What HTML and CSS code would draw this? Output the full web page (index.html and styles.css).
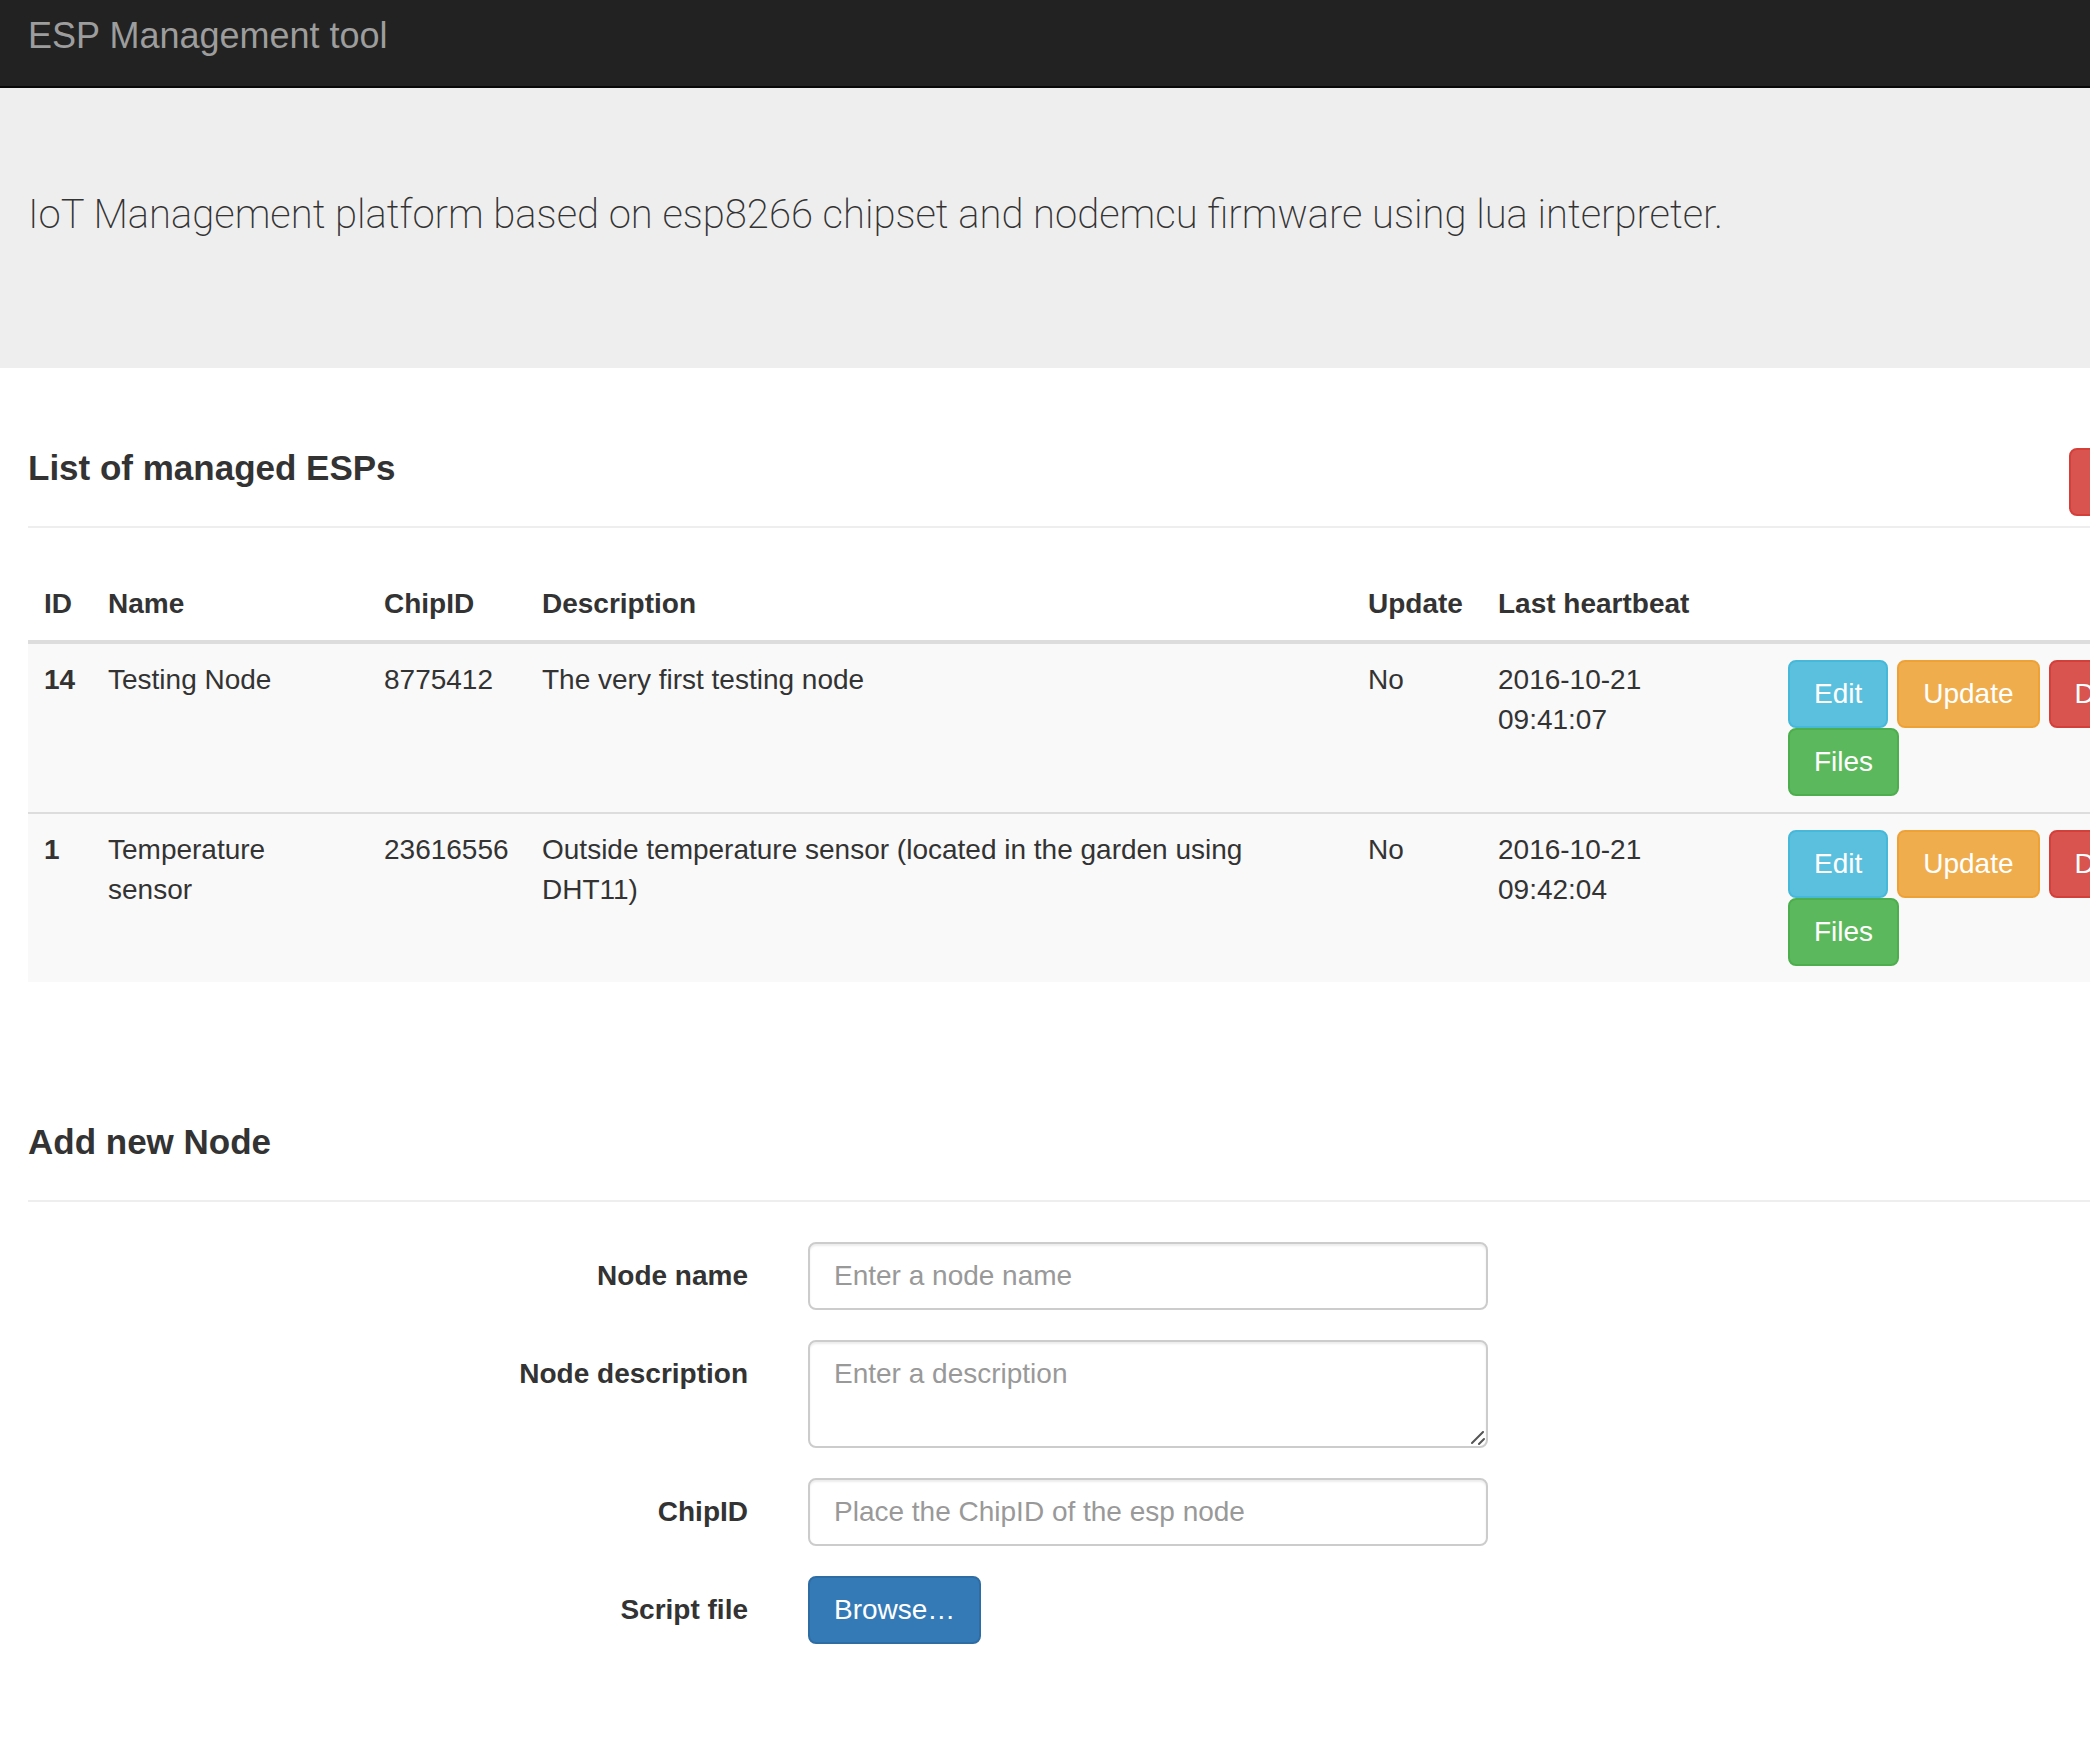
FILE: index.html
```html
<!DOCTYPE html>
<html lang="en">
<head>
<meta charset="utf-8">
<meta name="viewport" content="width=device-width, initial-scale=1">
<title>ESP Management tool</title>
<link rel="stylesheet" href="styles.css">
</head>
<body>
<nav class="navbar"><a class="brand" href="#">ESP Management tool</a></nav>
<header class="hero">
  <p class="lead">IoT Management platform based on esp8266 chipset and nodemcu firmware using lua interpreter.</p>
</header>
<main class="container">
  <section class="nodes">
    <div class="section-head section-head-tools">
      <h4 class="section-title">List of managed ESPs</h4>
      <button class="btn btn-danger btn-wide" type="button"></button>
    </div>
    <table class="table">
      <colgroup>
        <col class="col-id"><col class="col-name"><col class="col-chip"><col class="col-desc"><col class="col-update"><col class="col-beat"><col>
      </colgroup>
      <thead>
        <tr><th>ID</th><th>Name</th><th>ChipID</th><th>Description</th><th>Update</th><th>Last heartbeat</th><th></th></tr>
      </thead>
      <tbody>
        <tr>
          <th scope="row">14</th><td>Testing Node</td><td>8775412</td><td>The very first testing node</td><td>No</td><td>2016-10-21<br>09:41:07</td>
          <td><div class="actions">
            <button class="btn btn-info" type="button">Edit</button>
            <button class="btn btn-warning" type="button">Update</button>
            <button class="btn btn-danger" type="button">Delete</button>
            <button class="btn btn-success" type="button">Files</button>
          </div></td>
        </tr>
        <tr>
          <th scope="row">1</th><td>Temperature sensor</td><td>23616556</td><td class="description">Outside temperature sensor (located in the garden using DHT11)</td><td>No</td><td>2016-10-21<br>09:42:04</td>
          <td><div class="actions">
            <button class="btn btn-info" type="button">Edit</button>
            <button class="btn btn-warning" type="button">Update</button>
            <button class="btn btn-danger" type="button">Delete</button>
            <button class="btn btn-success" type="button">Files</button>
          </div></td>
        </tr>
      </tbody>
    </table>
  </section>
  <section>
    <div class="section-head">
      <h4 class="section-title">Add new Node</h4>
    </div>
    <form class="form">
      <label class="label" for="name">Node name</label>
      <input class="control" id="name" type="text" placeholder="Enter a node name">
      <label class="label" for="description">Node description</label>
      <textarea class="control control-area" id="description" placeholder="Enter a description"></textarea>
      <label class="label" for="chip">ChipID</label>
      <input class="control" id="chip" type="text" placeholder="Place the ChipID of the esp node">
      <label class="label" for="script">Script file</label>
      <button class="btn btn-primary" id="script" type="button">Browse…</button>
    </form>
  </section>
</main>
</body>
</html>
```
FILE: styles.css
```css
*,
*::before,
*::after {
  box-sizing: border-box;
}

body {
  margin: 0;
  overflow-x: hidden;
  background: #fff;
  color: #333;
  font: 28px/40px "Liberation Sans", Arial, sans-serif;
}

.navbar {
  padding: 16px 28px 30px;
  background: #222;
  border-bottom: 2px solid #080808;
}

.brand {
  display: block;
  color: #9d9d9d;
  font-size: 36px;
  text-decoration: none;
}

.hero {
  padding: 98px 28px 124px;
  background: #eee;
}

.lead {
  margin: 0;
  font: 200 40px/58px Roboto, "Liberation Sans", sans-serif;
}

.container {
  min-width: 2308px;
  padding: 80px 0 80px 28px;
}

.section-head {
  padding-bottom: 38px;
  border-bottom: 2px solid #eee;
  margin-bottom: 40px;
}

.section-head-tools {
  display: flex;
  justify-content: space-between;
  align-items: flex-start;
  padding-bottom: 10px;
}

.section-title {
  margin: 0;
  font-size: 35px;
  font-weight: 700;
}

.nodes {
  margin-bottom: 140px;
}

.table {
  width: 100%;
  table-layout: fixed;
  border-spacing: 0;
}

.table th,
.table td {
  padding: 16px;
  text-align: left;
  vertical-align: top;
}

.table thead th {
  border-bottom: 4px solid #ddd;
}

.table tbody tr {
  background: #f9f9f9;
}

.table tbody tr + tr > * {
  border-top: 2px solid #ddd;
}

.table .description {
  padding-right: 80px;
}

.col-id { width: 64px; }
.col-name { width: 276px; }
.col-chip { width: 158px; }
.col-desc { width: 826px; }
.col-update { width: 130px; }
.col-beat { width: 290px; }

.actions {
  display: flex;
  flex-wrap: wrap;
  column-gap: 9px;
}

.btn {
  padding: 12px 24px;
  border: 2px solid;
  border-radius: 8px;
  color: #fff;
  font: inherit;
  white-space: nowrap;
}

.btn-wide {
  width: 239px;
  height: 68px;
}

.btn-info { background: #5bc0de; border-color: #46b8da; }
.btn-warning { background: #f0ad4e; border-color: #eea236; }
.btn-danger { background: #d9534f; border-color: #d43f3a; }
.btn-success { background: #5cb85c; border-color: #4cae4c; }
.btn-primary { background: #337ab7; border-color: #2e6da4; }

.form {
  display: grid;
  grid-template-columns: 720px 680px;
  gap: 30px 60px;
  justify-items: start;
  align-items: start;
}

.label {
  justify-self: end;
  padding-top: 14px;
  font-weight: 700;
}

.control {
  display: block;
  width: 100%;
  height: 68px;
  padding: 12px 24px;
  border: 2px solid #ccc;
  border-radius: 8px;
  background: #fff;
  box-shadow: inset 0 2px 2px rgba(0, 0, 0, 0.075);
  color: #555;
  font: inherit;
}

.control::placeholder {
  color: #999;
  opacity: 1;
}

.control-area {
  height: 108px;
  resize: vertical;
}

.control-area::-webkit-resizer {
  background: url("data:image/svg+xml,%3Csvg xmlns='http://www.w3.org/2000/svg' width='15' height='15'%3E%3Cpath d='M1 12L12 1M8 13L13 8' stroke='%23555' stroke-width='2' stroke-linecap='round'/%3E%3C/svg%3E") no-repeat;
}
```
